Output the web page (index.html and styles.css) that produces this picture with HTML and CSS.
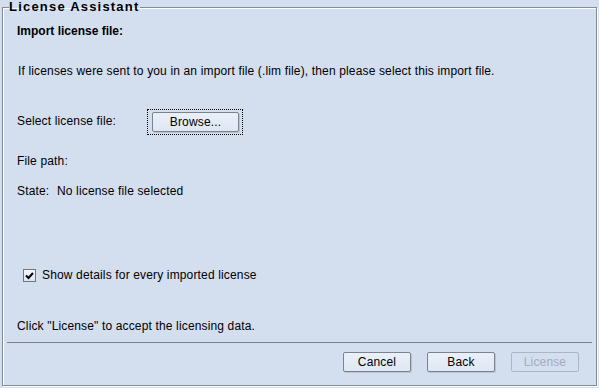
FILE: index.html
```html
<!DOCTYPE html>
<html lang="en">
<head>
  <meta charset="UTF-8" />
  <title>License Assistant</title>
  <link rel="stylesheet" href="styles.css">
</head>
<body>
  <fieldset class="assistant">
    <legend class="assistant-title">License Assistant</legend>

    <div class="content">
      <div class="row step-title">Import license file:</div>
      <div class="row intro">If licenses were sent to you in an import file (.lim file), then please select this import file.</div>

      <div class="row select-row">
        <span class="label">Select license file:</span>
        <span class="focus-ring"><button class="btn browse">Browse...</button></span>
      </div>

      <div class="row file-path">File path:</div>
      <div class="row state"><span class="state-label">State:</span>No license file selected</div>

      <label class="row check-row">
        <span class="checkbox">
          <svg width="11" height="11" viewBox="0 0 11 11"><path d="M2 5.5 L4.5 8 L9 3" fill="none" stroke="#000" stroke-width="2"/></svg>
        </span>
        Show details for every imported license
      </label>

      <div class="row hint">Click "License" to accept the licensing data.</div>
    </div>

    <div class="separator"></div>

    <div class="actions">
      <button class="btn">Cancel</button>
      <button class="btn">Back</button>
      <button class="btn" disabled>License</button>
    </div>
  </fieldset>
</body>
</html>
```

FILE: styles.css
```css
* {
  margin: 0;
  padding: 0;
  box-sizing: border-box;
}

html, body {
  width: 599px;
  height: 388px;
  overflow: hidden;
}

body {
  background-color: #d3deee;
  color: #000;
  font-family: "Liberation Sans", Arial, sans-serif;
  font-size: 12px;
  letter-spacing: 0.15px;
  padding: 0 2px 2px 2px;
}

.assistant {
  height: 386px;
  border: 1px solid #858b96;
  box-shadow: 1px 1px 0 #ffffff, inset 1px 1px 0 #ffffff;
  padding: 0 4px 0 4px;
  display: flex;
  flex-direction: column;
}

.assistant-title {
  font-weight: bold;
  font-size: 13px;
  letter-spacing: 1.2px;
  line-height: 14px;
  padding: 0 1px 0 0;
  margin-left: 2px;
}

.content {
  padding-left: 10px;
  flex: 1;
}

.row {
  height: 20px;
  line-height: 20px;
  display: flex;
  align-items: center;
}

.step-title {
  font-weight: bold;
  letter-spacing: 0;
  margin-top: 7px;
}

.intro {
  margin-top: 20px;
  padding-left: 1px;
}

.select-row {
  margin-top: 30px;
}

.label {
  width: 130px;
}

.focus-ring {
  display: inline-flex;
  padding: 2px 3px 2px 4px;
  border: 1px dotted #000;
  margin-top: 1px;
}

.btn {
  font-family: "Liberation Sans", Arial, sans-serif;
  font-size: 12px;
  letter-spacing: 0.15px;
  color: #000;
  width: 68px;
  height: 20px;
  background: linear-gradient(#eaf0fa, #dfe7f3);
  border: 1px solid #7d838e;
  border-radius: 2px;
  box-shadow: 1px 1px 0 #b9c3d3;
}

.btn.browse {
  width: 87px;
}

.btn:disabled {
  color: #a3adbd;
  border-color: #abb5c4;
  background: #d3deee;
  box-shadow: none;
}

.file-path {
  margin-top: 20px;
}

.state {
  margin-top: 10px;
}

.state-label {
  width: 40px;
}

.check-row {
  margin-top: 64px;
  padding-left: 6px;
}

.checkbox {
  width: 13px;
  height: 13px;
  border: 1px solid #6f7683;
  background: linear-gradient(#f4f7fc, #dde5f1);
  display: inline-flex;
  align-items: center;
  justify-content: center;
  margin-right: 6px;
}

.hint {
  margin-top: 31px;
}

.separator {
  height: 1px;
  background-color: #808080;
  margin: 0 0 9px 0;
}

.actions {
  display: flex;
  justify-content: flex-end;
  gap: 16px;
  padding-right: 13px;
  margin-bottom: 13px;
}
```
